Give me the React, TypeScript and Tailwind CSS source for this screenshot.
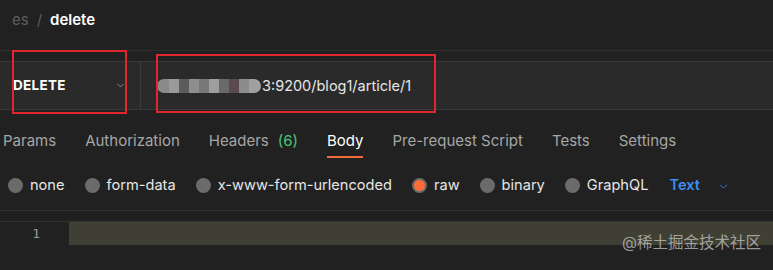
import { ChevronDown } from 'lucide-react'

const tabs = [
  { label: 'Params' },
  { label: 'Authorization' },
  { label: 'Headers', count: '(6)' },
  { label: 'Body', active: true },
  { label: 'Pre-request Script' },
  { label: 'Tests' },
  { label: 'Settings' },
]

const bodyTypes = [
  { label: 'none' },
  { label: 'form-data' },
  { label: 'x-www-form-urlencoded' },
  { label: 'raw', checked: true },
  { label: 'binary' },
  { label: 'GraphQL' },
]

export default function App() {
  return (
    <div
      className="relative w-[773px] h-[270px] overflow-hidden bg-[#212121] text-[#a6a6a6]"
      style={{ fontFamily: 'Inter, "Noto Sans CJK SC", sans-serif' }}
    >
      {/* breadcrumb */}
      <div className="h-[51px] flex items-center pl-3 pb-[9px] text-[15px] border-b border-[#2f2f2f]">
        <span className="text-[#5e5e5e]">es</span>
        <span className="text-[#5e5e5e] mx-[8px]">/</span>
        <span className="text-white font-semibold">delete</span>
      </div>

      <div className="h-[11px] bg-[#212121] border-b border-[#383838]" />

      {/* request row */}
      <div className="h-[48px] flex bg-[#2a2a2a] border-b border-[#383838]">
        <div className="w-[141px] flex items-center pl-[13px] pr-[14px] border-r border-[#3a3a3a]">
          <span className="text-white font-bold text-[13.5px] tracking-[0.3px] flex-1">DELETE</span>
          <ChevronDown className="w-[11px] h-[11px] text-[#b0b0b0]" strokeWidth={1.5} />
        </div>
        <div className="flex items-center pl-[16px] text-[14.5px] text-[#e6e6e6]">
          <span className="flex items-center h-[14px] mr-[1px]">
            <span className="w-[12px] h-[14px] rounded-l-full bg-[#8a8a8a]" />
            <span className="w-[10px] h-[14px] bg-[#9a9a9a]" />
            <span className="w-[10px] h-[14px] bg-[#5c5c5c]" />
            <span className="w-[10px] h-[14px] bg-[#8e8e8e]" />
            <span className="w-[10px] h-[14px] bg-[#787878]" />
            <span className="w-[10px] h-[14px] bg-[#9e9e9e]" />
            <span className="w-[10px] h-[14px] bg-[#6a6a6a]" />
            <span className="w-[10px] h-[14px] bg-[#5a4a4e]" />
            <span className="w-[10px] h-[14px] bg-[#8c8c8c]" />
            <span className="w-[12px] h-[14px] rounded-r-full bg-[#a0a0a0]" />
          </span>
          <span>3:9200/blog1/article/1</span>
        </div>
      </div>

      {/* tabs */}
      <div className="h-[50px] flex pl-[3px] gap-[29px] text-[15px]">
        {tabs.map((t) => (
          <div
            key={t.label}
            className={`h-full flex items-center pt-[12px] relative ${t.active ? 'text-white' : 'text-[#a6a6a6]'}`}
          >
            <span>{t.label}</span>
            {t.count && <span className="ml-[9px] text-[#4cc47a]">{t.count}</span>}
            {t.active && <span className="absolute left-0 right-0 bottom-[2px] h-[2px] bg-[#f26b3a]" />}
          </div>
        ))}
      </div>

      {/* body types */}
      <div className="h-[50px] flex items-center pl-[8px] pt-[2px] text-[14.6px] text-[#e6e6e6]">
        {bodyTypes.map((b) => (
          <div key={b.label} className="flex items-center mr-[20px]">
            {b.checked ? (
              <span className="w-[15px] h-[15px] rounded-full bg-[#ff6c37] border-[2px] border-[#6b6b6b]" />
            ) : (
              <span className="w-[15px] h-[15px] rounded-full bg-[#6b6b6b]" />
            )}
            <span className="ml-[7px]">{b.label}</span>
          </div>
        ))}
        <span className="ml-[1px] text-[#3d8ef0] font-semibold">Text</span>
        <ChevronDown className="ml-[17px] w-[13px] h-[13px] text-[#3d8ef0]" strokeWidth={1.5} />
      </div>

      {/* editor */}
      <div className="h-[12px] border-t border-b border-[#333333] bg-[#1f1f1f]" />
      <div className="flex h-[23px]">
        <div className="w-[69px] flex items-center justify-end pr-[29px] text-[13px] text-[#9a9a9a] bg-[#212121]" style={{ fontFamily: '"DejaVu Sans Mono", monospace' }}>
          1
        </div>
        <div className="flex-1 bg-[#3f4033]" />
      </div>

      {/* annotation boxes */}
      <div className="absolute left-[12px] top-[50px] w-[115px] h-[64px] border-2 border-[#e0262e]" />
      <div className="absolute left-[156px] top-[54px] w-[280px] h-[59px] border-2 border-[#e0262e]" />

      {/* watermark */}
      <div className="absolute right-[12px] top-[231px] text-[15.5px] text-[#d0d0d0]/70">@稀土掘金技术社区</div>
    </div>
  )
}
